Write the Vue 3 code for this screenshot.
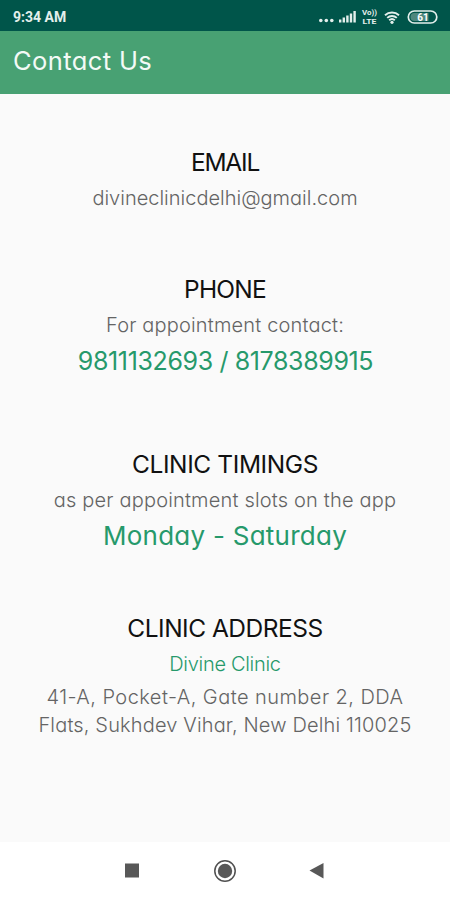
<script setup>
const sections = [
  {
    name: 'email',
    title: 'EMAIL',
    lines: [{ text: 'divineclinicdelhi@gmail.com', type: 'text mail' }],
  },
  {
    name: 'phone',
    title: 'PHONE',
    lines: [
      { text: 'For appointment contact:', type: 'text contact' },
      { text: '9811132693 / 8178389915', type: 'big number' },
    ],
  },
  {
    name: 'timings',
    title: 'CLINIC TIMINGS',
    lines: [
      { text: 'as per appointment slots on the app', type: 'text slots' },
      { text: 'Monday - Saturday', type: 'big days' },
    ],
  },
  {
    name: 'address',
    title: 'CLINIC ADDRESS',
    lines: [
      { text: 'Divine Clinic', type: 'text clinic' },
      { text: '41-A, Pocket-A, Gate number 2, DDA', type: 'text street' },
      { text: 'Flats, Sukhdev Vihar, New Delhi 110025', type: 'text city' },
    ],
  },
]
</script>

<template>
  <div class="screen">
    <div class="status">
      <span class="time">9:34 AM</span>
      <svg class="icons" width="124" height="20" viewBox="0 0 124 20">
        <g fill="#e3efec">
          <circle cx="2.8" cy="13.5" r="1.8" />
          <circle cx="8.3" cy="13.5" r="1.8" />
          <circle cx="13.8" cy="13.5" r="1.8" />
          <path d="M21 12.5h2.4v3H21zM24.6 10.5h2.4v5h-2.4zM28.2 8.5h2.4v7h-2.4zM31.8 6.5h2.4v9h-2.4zM35.4 4h2.4v11.5h-2.4z" />
          <text class="lte" x="44" y="8.3" textLength="15" lengthAdjust="spacingAndGlyphs">Vo))</text>
          <text class="lte" x="44.5" y="17.3" textLength="14" lengthAdjust="spacingAndGlyphs">LTE</text>
          <circle cx="74" cy="15.3" r="1.6" />
        </g>
        <g fill="none" stroke="#e3efec" stroke-width="1.9">
          <path d="M67 8.2a10.3 10.3 0 0 1 14 0" />
          <path d="M69.2 10.9a7 7 0 0 1 9.6 0" />
          <path d="M71.2 13.3a4.2 4.2 0 0 1 5.6 0" />
          <rect x="90.3" y="4" width="28.5" height="12" rx="6" stroke-width="1.7" />
        </g>
        <path d="M96.5 6h14v8h-14a4 4 0 0 1 0-8z" fill="#4e877d" />
        <text class="level" x="105" y="13.7" text-anchor="middle">61</text>
      </svg>
    </div>

    <div class="header">
      <h1>Contact Us</h1>
    </div>

    <div class="content">
      <div v-for="section in sections" :key="section.name" class="section" :class="section.name">
        <h2>{{ section.title }}</h2>
        <p v-for="line in section.lines" :key="line.text" :class="line.type">{{ line.text }}</p>
      </div>
    </div>

    <div class="navbar">
      <svg width="24" height="24" viewBox="0 0 24 24">
        <rect x="5" y="4.5" width="14" height="14" fill="#585858" />
      </svg>
      <svg width="24" height="24" viewBox="0 0 24 24">
        <circle cx="12" cy="12" r="10.2" fill="none" stroke="#505050" stroke-width="1.5" />
        <circle cx="12" cy="12" r="7.2" fill="#585858" />
      </svg>
      <svg width="24" height="24" viewBox="0 0 24 24">
        <path d="M3.5 11.5L17.5 4v15.5z" fill="#585858" />
      </svg>
    </div>
  </div>
</template>

<style>
body {
  margin: 0;
}
</style>

<style scoped>
.screen {
  width: 450px;
  height: 900px;
  display: flex;
  flex-direction: column;
  overflow: hidden;
  background-color: #fafafa;
  font-family: Inter, 'Open Sans', sans-serif;
  /* single-storey a */
  font-feature-settings: 'cv11';
}
.status {
  height: 31px;
  display: flex;
  align-items: center;
  justify-content: space-between;
  box-sizing: border-box;
  padding: 2px 8px 0 13px;
  background-color: #00554a;
}
.time {
  color: #e3efec;
  font-family: Roboto, sans-serif;
  font-size: 14px;
  font-weight: 700;
}
.lte {
  font-family: Roboto, sans-serif;
  font-size: 7.5px;
  font-weight: 700;
}
.level {
  fill: #fff;
  font-family: Roboto, sans-serif;
  font-size: 10px;
  font-weight: 700;
}
.header {
  height: 63px;
  box-sizing: border-box;
  padding: 14px 13px 0;
  background-color: #48a173;
}
h1 {
  margin: 0;
  color: #f3faf6;
  font-size: 25.5px;
  font-weight: 400;
  line-height: 32px;
  letter-spacing: 0.4px;
}
.content {
  flex: 1;
  padding-top: 50px;
  text-align: center;
  white-space: nowrap;
}
.section {
  height: 127px;
}
.phone {
  height: 175px;
}
.timings {
  height: 164px;
}
h2 {
  margin: 0;
  color: #111;
  font-size: 24.5px;
  font-weight: 400;
  line-height: 36px;
  letter-spacing: -0.4px;
}
.email h2 {
  letter-spacing: -1.2px;
}
.phone h2 {
  letter-spacing: -0.8px;
}
.address h2 {
  letter-spacing: -0.5px;
}
p {
  margin: 0;
}
.text {
  color: #646464;
  font-size: 20px;
  font-weight: 300;
  line-height: 36px;
}
.big {
  color: #26996b;
  font-size: 25px;
  font-weight: 400;
  line-height: 36px;
}
.contact {
  padding-top: 1px;
  line-height: 35px;
  letter-spacing: 0.17px;
}
.number {
  padding-left: 1px;
  letter-spacing: -0.37px;
}
.slots {
  letter-spacing: 0.18px;
}
.days {
  font-size: 26px;
  letter-spacing: 0.25px;
}
.clinic {
  color: #26996b;
  letter-spacing: -0.3px;
}
.street {
  line-height: 30px;
  letter-spacing: 0.45px;
}
.city {
  line-height: 27px;
  letter-spacing: 0.15px;
}
.navbar {
  height: 58px;
  display: flex;
  align-items: center;
  justify-content: center;
  gap: 69px;
  background-color: #fff;
}
</style>
